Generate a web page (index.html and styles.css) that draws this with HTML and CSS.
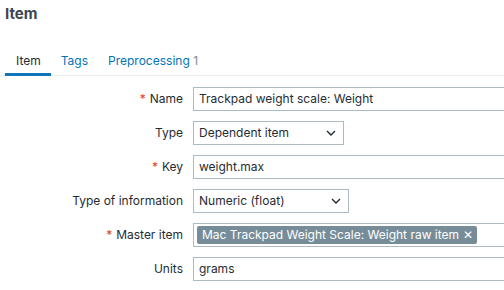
FILE: index.html
```html
<!DOCTYPE html>
<html>
<head>
<meta charset="utf-8">
<link rel="stylesheet" href="styles.css">
</head>
<body>
<div class="page">
  <h1 class="title">Item</h1>
  <nav class="tabs">
    <a class="tab active">Item</a>
    <a class="tab">Tags</a>
    <a class="tab">Preprocessing <span class="count">1</span></a>
  </nav>
  <form class="form">
    <label class="lbl"><span class="req">*</span>Name</label>
    <div class="field"><div class="input wide">Trackpad weight scale: Weight</div></div>

    <label class="lbl">Type</label>
    <div class="field"><div class="select w150">Dependent item<svg class="chev" viewBox="0 0 10 6" width="10" height="6"><path d="M1 1 L5 5 L9 1" fill="none" stroke="#1f2c33" stroke-width="1.4"/></svg></div></div>

    <label class="lbl"><span class="req">*</span>Key</label>
    <div class="field"><div class="input wide">weight.max</div></div>

    <label class="lbl">Type of information</label>
    <div class="field"><div class="select w155">Numeric (float)<svg class="chev" viewBox="0 0 10 6" width="10" height="6"><path d="M1 1 L5 5 L9 1" fill="none" stroke="#1f2c33" stroke-width="1.4"/></svg></div></div>

    <label class="lbl"><span class="req">*</span>Master item</label>
    <div class="field"><div class="input wide multi"><span class="tag">Mac Trackpad Weight Scale: Weight raw item<span class="x">✕</span></span></div></div>

    <label class="lbl">Units</label>
    <div class="field"><div class="input wide">grams</div></div>
  </form>
</div>
</body>
</html>
```
FILE: styles.css
```css
html, body {
  margin: 0;
  padding: 0;
  background: #fff;
  overflow: hidden;
}
.page {
  font-family: Inter, "Noto Sans", sans-serif;
  font-size: 12px;
  color: #1f2c33;
  width: 504px;
  height: 290px;
  overflow: hidden;
}
.title {
  margin: 0;
  padding: 5px 0 0 5px;
  font-size: 15px;
  font-weight: 700;
  line-height: 18px;
  color: #3b4650;
}
.tabs {
  display: flex;
  margin-top: 24px;
  padding-left: 5px;
  border-bottom: 1px solid #ebeef0;
  height: 29px;
  box-sizing: border-box;
}
.tab {
  display: block;
  padding: 1px 10px 0 10px;
  line-height: 26px;
  font-size: 12px;
  color: #0275b8;
}
.tab.active {
  color: #1f2c33;
  padding-left: 11px;
  border-bottom: 3px solid #0f74b8;
  margin-bottom: -1px;
}
.count {
  color: #768d99;
}
.form {
  display: grid;
  grid-template-columns: 183px 1fr;
  column-gap: 10px;
  row-gap: 10px;
  margin-top: 11px;
  align-items: center;
}
.lbl {
  text-align: right;
  font-size: 12px;
  line-height: 24px;
  color: #1f2c33;
}
.req {
  color: #e33734;
  margin-right: 4px;
}
.field {
  display: flex;
}
.input, .select {
  box-sizing: border-box;
  height: 24px;
  border: 1px solid #acbbc2;
  padding: 0 5px;
  line-height: 22px;
  font-size: 12px;
  color: #1f2c33;
  white-space: nowrap;
  flex-shrink: 0;
}
.wide {
  width: 460px;
}
.select {
  display: flex;
  align-items: center;
  justify-content: space-between;
}
.w150 { width: 151px; }
.w155 { width: 156px; }
.chev {
  margin-right: 2px;
}
.multi {
  padding: 2px 3px;
  display: flex;
  align-items: center;
}
.tag {
  background: #768d99;
  color: #fff;
  border-radius: 2px;
  height: 18px;
  line-height: 18px;
  padding: 0 4px 0 5px;
  display: inline-flex;
  align-items: center;
  gap: 4px;
}
.x {
  font-size: 12px;
}
```
